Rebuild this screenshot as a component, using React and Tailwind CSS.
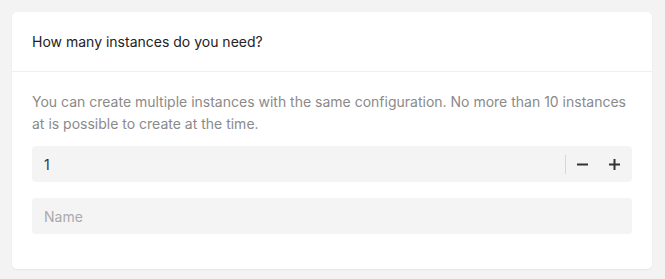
import { useState } from 'react';

export default function App() {
  const [count, setCount] = useState(1);
  const [name, setName] = useState('');

  return (
    <div className="min-h-screen bg-[#f3f3f3] p-3 font-['Inter',sans-serif]">
      <div className="h-[257px] w-[640px] rounded-[5px] bg-white shadow-[0_1px_2px_rgba(0,0,0,0.06)]">
        {/* Header */}
        <div className="flex h-[60px] items-center border-b border-[#efefef] px-5">
          <h2 className="text-[14px] text-[#222]">How many instances do you need?</h2>
        </div>

        {/* Body */}
        <div className="px-5 pt-[19px]">
          <p className="text-[14px] leading-[22px] text-[#8a8a8a]">
            You can create multiple instances with the same configuration. No more than 10 instances
            at is possible to create at the time.
          </p>

          <div className="mt-[11px] flex h-9 items-center rounded-[4px] bg-[#f4f4f4] pr-[2px]">
            <input
              value={count}
              onChange={(e) => setCount(e.target.value)}
              className="h-full flex-1 bg-transparent px-3 text-[14px] text-[#333] outline-none"
            />
            <div className="h-[19px] w-px bg-[#d6d6d6]" />
            <button
              onClick={() => setCount((c) => Math.max(1, Number(c) - 1))}
              className="flex h-full w-8 items-center justify-center text-[#333]"
            >
              <svg width="11" height="11" viewBox="0 0 11 11">
                <rect x="0" y="4.5" width="11" height="2" fill="currentColor" />
              </svg>
            </button>
            <button
              onClick={() => setCount((c) => Math.min(10, Number(c) + 1))}
              className="flex h-full w-8 items-center justify-center text-[#333]"
            >
              <svg width="11" height="11" viewBox="0 0 11 11">
                <rect x="0" y="4.5" width="11" height="2" fill="currentColor" />
                <rect x="4.5" y="0" width="2" height="11" fill="currentColor" />
              </svg>
            </button>
          </div>

          <input
            value={name}
            onChange={(e) => setName(e.target.value)}
            placeholder="Name"
            className="mt-4 h-9 w-full rounded-[4px] bg-[#f4f4f4] px-3 text-[14px] text-[#333] outline-none placeholder:text-[#aaa]"
          />
        </div>
      </div>
    </div>
  );
}
